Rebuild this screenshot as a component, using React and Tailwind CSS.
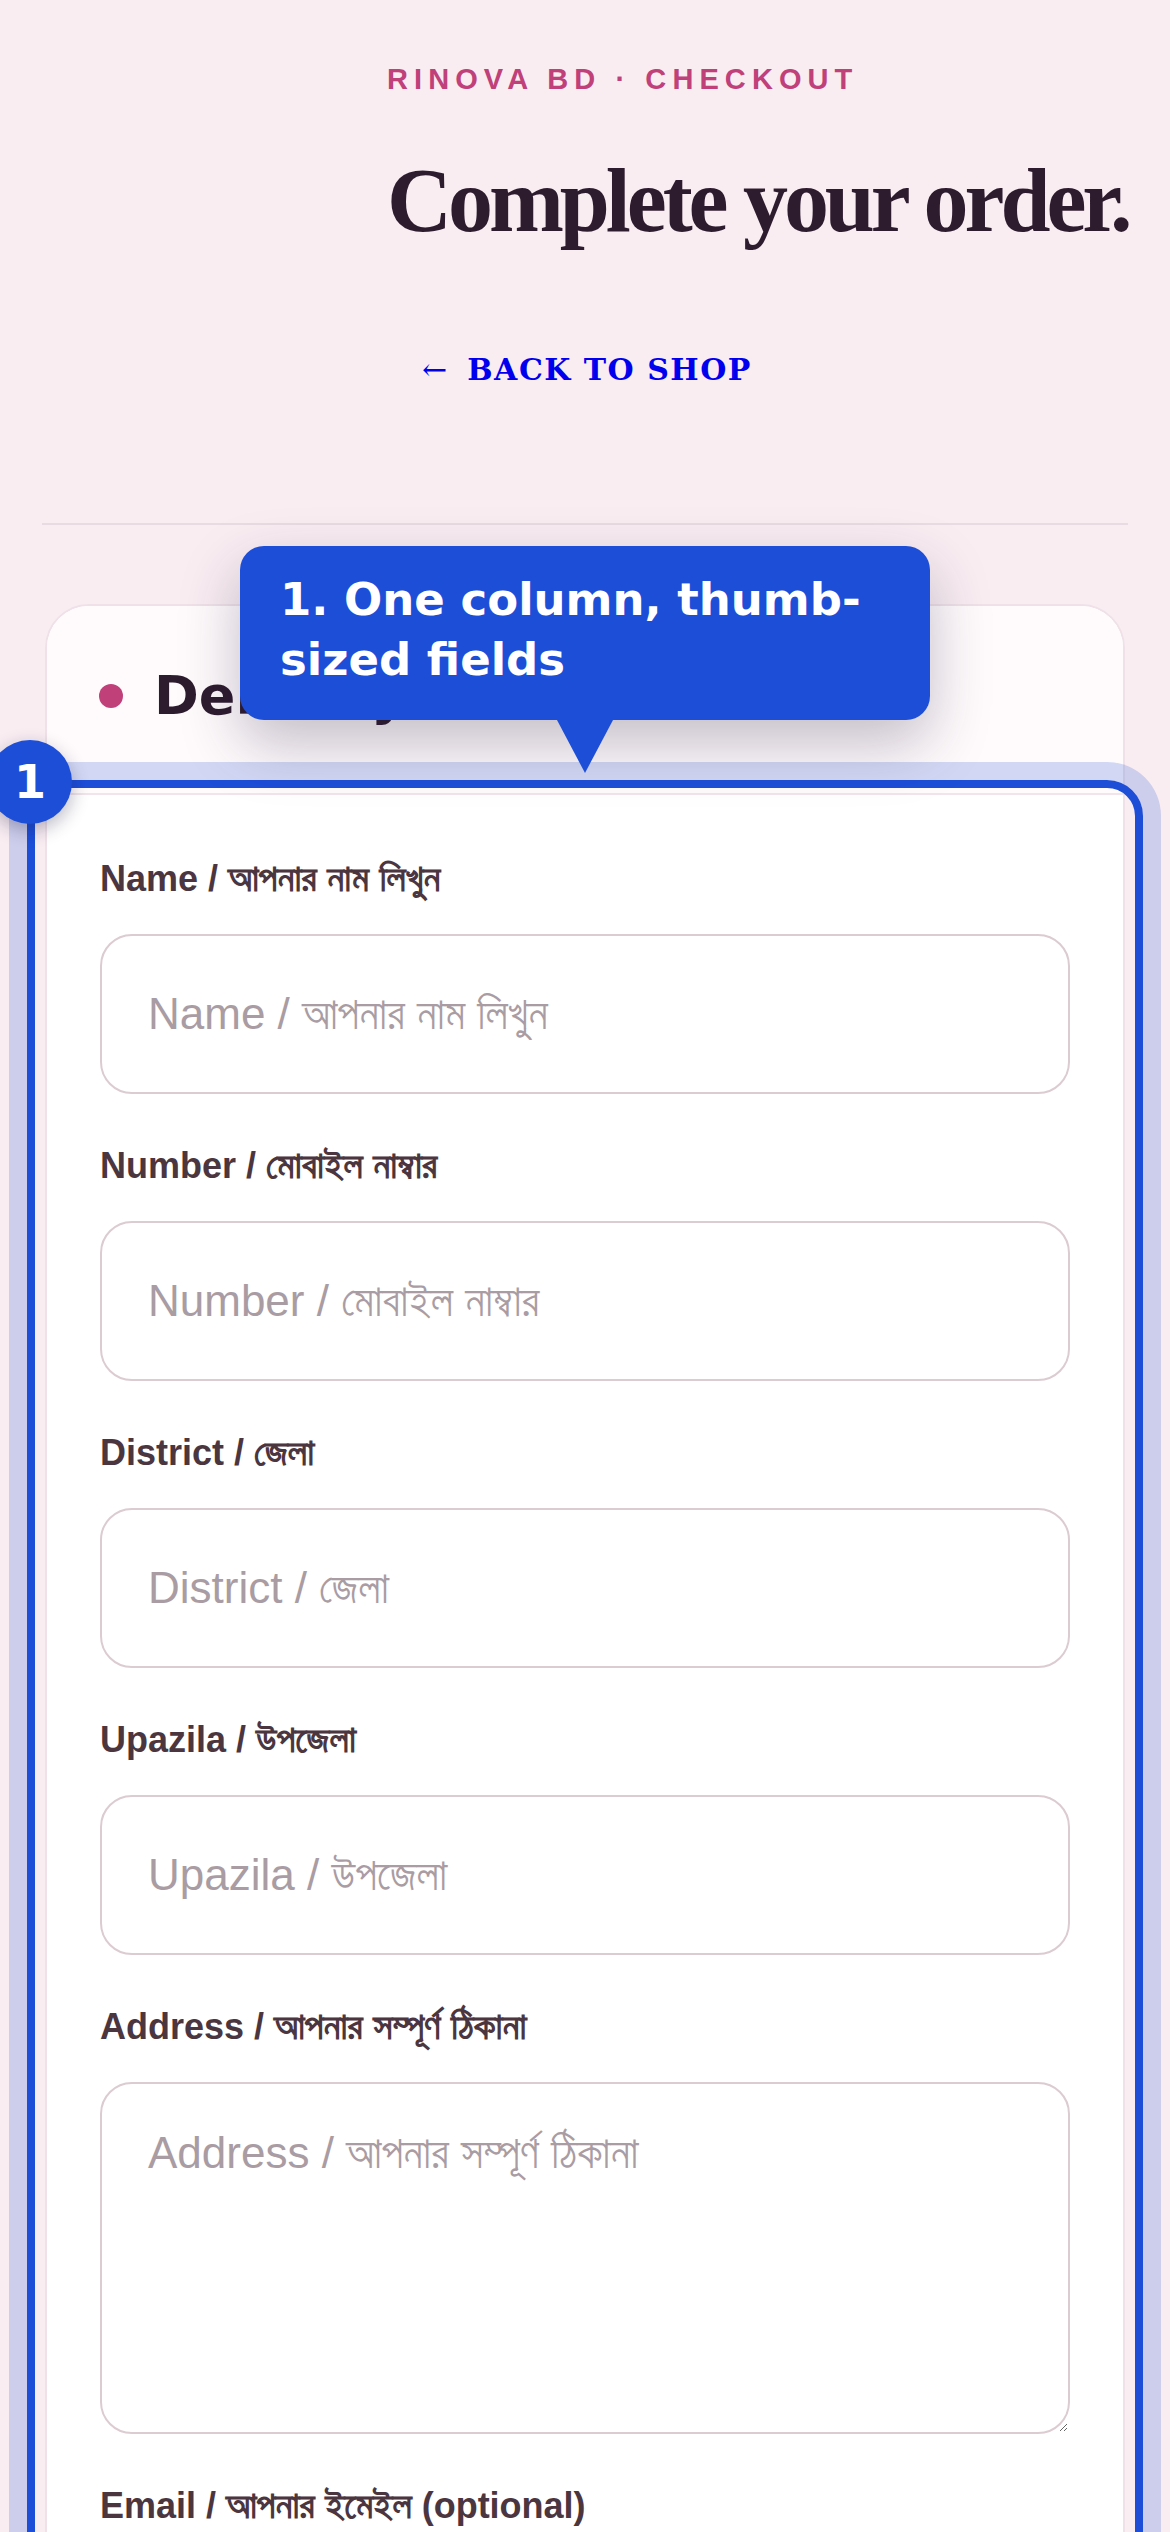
import React from "react";

const fields = [
  { en: "Name / ", bn: "আপনার নাম লিখুন", ph: "Name / আপনার নাম লিখুন" },
  { en: "Number / ", bn: "মোবাইল নাম্বার", ph: "Number / মোবাইল নাম্বার" },
  { en: "District / ", bn: "জেলা", ph: "District / জেলা" },
  { en: "Upazila / ", bn: "উপজেলা", ph: "Upazila / উপজেলা" },
  { en: "Address / ", bn: "আপনার সম্পূর্ণ ঠিকানা", ph: "Address / আপনার সম্পূর্ণ ঠিকানা", area: true },
  { en: "Email / ", bn: "আপনার ইমেইল", tail: " (optional)", ph: "Email / আপনার ইমেইল (optional)" },
  { en: "Note / ", bn: "অতিরিক্ত তথ্য", ph: "Note / অতিরিক্ত তথ্য" },
];

function Field({ en, bn, tail, ph, area }) {
  return (
    <div className="flex flex-col">
      <label className="block h-[44px] whitespace-pre text-[36px] leading-[44px] font-bold text-[#4b3640] font-['Liberation_Sans','FreeSans',sans-serif]">
        {en}
        <span className="text-[38px] font-['FreeSans','Liberation_Sans',sans-serif]">{bn}</span>
        {tail}
      </label>
      {area ? (
        <textarea
          placeholder={ph}
          className="mt-[33px] block h-[352px] w-full resize-y rounded-[32px] border-2 border-[#dccbd1] bg-white px-[46px] pt-[42px] text-[44px] leading-[54px] text-[#2d1b2e] outline-none placeholder:text-[#a99ca3] font-['Liberation_Sans','FreeSans',sans-serif]"
        />
      ) : (
        <input
          placeholder={ph}
          className="mt-[33px] block h-[160px] w-full rounded-[32px] border-2 border-[#dccbd1] bg-white px-[46px] text-[44px] text-[#2d1b2e] outline-none placeholder:text-[#a99ca3] font-['Liberation_Sans','FreeSans',sans-serif]"
        />
      )}
    </div>
  );
}

export default function App() {
  return (
    <div className="relative h-[2532px] w-full overflow-hidden bg-[#f9edf2]">
      {/* Header */}
      <div className="mx-auto w-[396px] pt-[62px] text-center">
        <p className="whitespace-nowrap text-[29px] leading-[35px] font-bold tracking-[0.21em] text-[#c0407a] font-['Liberation_Sans',Arial,sans-serif]">
          RINOVA BD · CHECKOUT
        </p>
        <h1 className="mt-[59px] whitespace-nowrap text-[90px] leading-[90px] font-bold tracking-[-0.045em] text-[#2d1b2e] font-['Liberation_Serif','Times_New_Roman',serif]">
          Complete your order.
        </h1>
        <div className="mt-[106px]">
          <a
            href="#"
            className="inline-flex items-center gap-[20px] whitespace-nowrap pl-[4px] text-[30px] leading-[36px] font-bold uppercase text-[#0000ee] font-['DejaVu_Serif',serif]"
          >
            <span className="font-normal">←</span>
            <span className="tracking-[0.05em]">Back to shop</span>
          </a>
        </div>
      </div>

      {/* Divider */}
      <div className="mx-[42px] mt-[135px] h-[2px] bg-[#e8dbe1]" />

      {/* Card */}
      <div className="mx-[45px] mt-[79px] rounded-[44px] border-2 border-[#efe1e7] bg-white">
        <div className="flex items-center gap-[31px] rounded-t-[42px] bg-[#fffbfc] pl-[52px] pt-[60px] pb-[67px]">
          <span className="h-[24px] w-[24px] shrink-0 rounded-full bg-[#c0407a]" />
          <h2 className="whitespace-nowrap text-[54px] leading-[60px] font-bold text-[#2d1b2e] font-['DejaVu_Sans',sans-serif]">
            Delivery details
          </h2>
        </div>

        <div className="relative border-t-2 border-[#f1e4ea] px-[53px] pt-[62px] pb-[60px]">
          <div className="flex flex-col gap-[50px]">
            {fields.map((f) => (
              <Field key={f.en} {...f} />
            ))}
          </div>

          {/* Highlight overlay */}
          <div className="pointer-events-none absolute -top-[15px] -left-[20px] -right-[20px] h-[2200px] rounded-[36px] border-[8px] border-[#1d4ed8] shadow-[0_0_0_18px_rgba(29,78,216,0.2)]">
            <div className="absolute -left-[47px] -top-[48px] flex h-[84px] w-[84px] items-center justify-center rounded-full bg-[#1d4ed8] text-[46px] leading-none font-bold text-white shadow-[0_6px_18px_rgba(20,20,60,0.3)] font-['DejaVu_Sans',sans-serif]">
              1
            </div>
          </div>
        </div>
      </div>

      {/* Tooltip */}
      <div className="absolute left-[240px] top-[546px] z-20 w-[690px] rounded-[24px] bg-[#1d4ed8] px-[40px] pt-[24px] pb-[30px] text-[45px] leading-[60px] font-bold text-white shadow-[0_24px_60px_rgba(40,30,70,0.28)] font-['DejaVu_Sans',sans-serif]">
        1. One column, thumb-sized fields
        <svg
          className="absolute left-1/2 top-full -translate-x-1/2"
          width="56"
          height="53"
          viewBox="0 0 56 53"
        >
          <polygon points="0,0 56,0 28,53" fill="#1d4ed8" />
        </svg>
      </div>
    </div>
  );
}
